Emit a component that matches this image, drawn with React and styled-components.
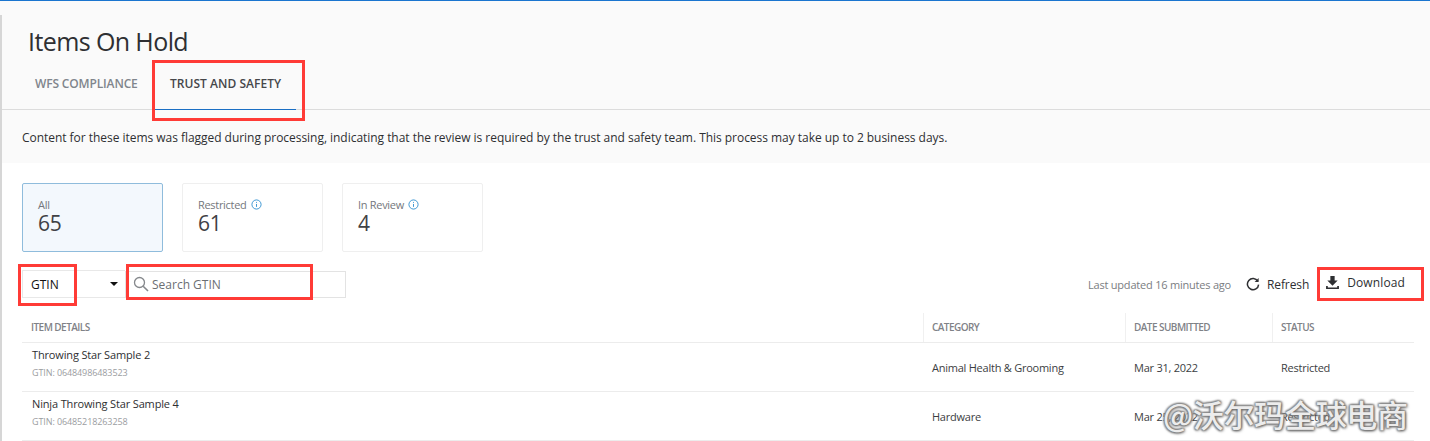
import React from "react";
import styled, { createGlobalStyle } from "styled-components";

const Global = createGlobalStyle`
  html, body { margin: 0; padding: 0; background: #fff; }
  body { font-family: "Open Sans", "Noto Sans", sans-serif; color: #2e2f32; }
`;
const Page = styled.div`
  position: relative; width: 1430px; height: 441px; overflow: hidden; background: #fff;
  border-top: 1px solid #1a75cf; box-sizing: border-box;
`;
const LeftEdge = styled.div`
  position: absolute; left: 0; top: 14px; bottom: 0; width: 2px; background: #d6d6d6;
`;
const Head = styled.header`
  background: #fafafa; height: 162px; padding-left: 2px; box-sizing: border-box;
`;
const Title = styled.h1`
  margin: 0; padding: 23px 0 0 26px; height: 61px; box-sizing: border-box;
  font-size: 25px; font-weight: 400; line-height: 34px; letter-spacing: -0.6px; color: #2e2f32;
`;
const Tabs = styled.nav`
  display: flex; height: 48px; box-sizing: border-box; border-bottom: 1px solid #dcdcdc; padding-left: 18px;
`;
const Tab = styled.div`
  width: ${p => p.$w}px; padding: 14px 0 0 ${p => p.$pad}px; box-sizing: border-box; margin-bottom: -1px;
  font-size: 12px; font-weight: 600; line-height: 16px;
  letter-spacing: ${p => (p.$active ? "0.03px" : "-0.15px")};
  color: ${p => (p.$active ? "#46474a" : "#80858c")};
  border-bottom: 1px solid ${p => (p.$active ? "#1a6fc4" : "transparent")};
`;
const Notice = styled.p`
  margin: 0; padding: 19px 0 0 20px; font-size: 12px; line-height: 17px; letter-spacing: -0.036px; color: #2e2f32;
`;
const Body = styled.main`
  padding: 20px 16px 0 22px; background: #fff;
`;
const Cards = styled.div`display: flex; gap: 19px;`;
const Card = styled.div`
  width: 141px; height: 69px; box-sizing: border-box; padding: 13px 15px; border-radius: 2px;
  border: 1px solid ${p => (p.$active ? "#8fbcdc" : "#efefef")};
  background: ${p => (p.$active ? "#f3f8fd" : "#fff")};
`;
const CardLabel = styled.div`
  display: flex; align-items: center; gap: 4px; font-size: 11px; line-height: 15px; letter-spacing: -0.3px; color: #74777c;
`;
const CardValue = styled.div`
  font-size: 21px; line-height: 23px; color: #3f4145; letter-spacing: -0.3px;
`;
const Toolbar = styled.div`
  display: flex; align-items: center; height: 28px; margin-top: 18px;
`;
const Select = styled.div`
  display: flex; align-items: center; justify-content: space-between; box-sizing: border-box;
  width: 103px; height: 28px; padding: 0 7px 0 8px; border: 1px solid #e8e8e8; border-right: 0;
  font-size: 12px; color: #111;
`;
const Caret = styled.span`
  width: 0; height: 0; border-left: 4px solid transparent; border-right: 4px solid transparent; border-top: 4px solid #111;
`;
const Search = styled.div`
  display: flex; align-items: center; gap: 3px; box-sizing: border-box; width: 221px; height: 27px;
  padding-left: 7px; border: 1px solid #e3e3e3; font-size: 12px; color: #6b6e73;
`;
const Spacer = styled.div`flex: 1;`;
const Updated = styled.span`
  font-size: 11px; letter-spacing: -0.21px; color: #7a7d82; margin-right: 15px;
`;
const Action = styled.div`
  display: flex; align-items: center; gap: 7px; font-size: 12px; color: #2e2f32;
  letter-spacing: ${p => (p.$up ? "0.12px" : "-0.1px")};
  margin-right: ${p => p.$mr || 0}px; position: relative; top: ${p => (p.$up ? "-2px" : "0")};
`;
const Table = styled.div`margin-top: 15px;`;
const HeadRow = styled.div`
  display: grid; grid-template-columns: 901px 202px 147px 142px; height: 29px; border-bottom: 1px solid #ececec;
`;
const HeadCell = styled.div`
  padding: 0 8px; font-size: 10px; font-weight: 600; line-height: 29px; letter-spacing: -0.55px; color: #7f8287;
  border-left: 1px solid ${p => (p.$first ? "transparent" : "#f0f0f0")};
`;
const Row = styled.div`
  display: grid; grid-template-columns: 901px 202px 147px 142px; height: 49px; align-items: center; box-sizing: border-box;
  border-bottom: 1px solid #ececec;
`;
const ItemCell = styled.div`padding: 0 0 8px 10px;`;
const ItemName = styled.div`font-size: 11px; line-height: 16px; letter-spacing: -0.15px; color: #2e2f32;`;
const ItemCode = styled.div`font-size: 9px; line-height: 12px; margin-top: 4px; letter-spacing: -0.1px; color: #9b9da1;`;
const Cell = styled.div`
  padding: 0 9px; font-size: 11px; letter-spacing: -0.24px; color: #3c3e42;
`;
const Mark = styled.div`
  position: absolute; box-sizing: border-box; border: 3px solid #ff3b36;
  left: ${p => p.$x}px; top: ${p => p.$y}px; width: ${p => p.$w}px; height: ${p => p.$h}px;
`;
const Watermark = styled.div`
  position: absolute; left: 1163px; top: 394px; font-family: "Noto Sans CJK SC", sans-serif; font-size: 31px; line-height: 38px;
  white-space: nowrap; color: #ececec; font-weight: 500; letter-spacing: -0.3px;
  text-shadow: 0 0 2px #777, 1px 1px 3px #666, -1px -1px 2px #999, 1px -1px 2px #999, -1px 1px 2px #999;
`;

const Info = () => (
  <svg width="11" height="11" viewBox="0 0 12 12" fill="none" stroke="#2f8fd0" strokeWidth="1">
    <circle cx="6" cy="6" r="5" />
    <path d="M6 5.4v3.2M6 3.2v1" />
  </svg>
);
const Glass = () => (
  <svg width="16" height="16" viewBox="0 0 16 16" fill="none" stroke="#85888c" strokeWidth="1.3">
    <circle cx="6.5" cy="6.5" r="5" />
    <path d="M10.2 10.2 15 15" strokeWidth="1.6" />
  </svg>
);
const RefreshIcon = () => (
  <svg width="14" height="14" viewBox="0 0 14 14" fill="none" stroke="#2e2f32" strokeWidth="1.5">
    <path d="M11.8 4.2A5.6 5.6 0 1 0 12.6 7.6" />
    <path d="M12.6 1v4H8.6z" fill="#2e2f32" stroke="none" />
  </svg>
);
const DownloadIcon = () => (
  <svg width="15" height="15" viewBox="0 0 14 14" fill="#2e2f32">
    <path d="M5 1h4v4.2h2.8L7 10 2.2 5.2H5z" />
    <path d="M1 10.2h1.6v1.5h8.8v-1.5H13V13H1z" />
  </svg>
);

const rows = [
  ["Throwing Star Sample 2", "GTIN: 06484986483523", "Animal Health & Grooming", "Mar 31, 2022", "Restricted"],
  ["Ninja Throwing Star Sample 4", "GTIN: 06485218263258", "Hardware", "Mar 25, 2022", "Restricted"],
];

export default function App() {
  return (
    <>
      <Global />
      <Page>
        <LeftEdge />
        <Head>
          <Title>Items On Hold</Title>
          <Tabs>
            <Tab $w={135} $pad={15}>WFS COMPLIANCE</Tab>
            <Tab $w={141} $active $pad={15}>TRUST AND SAFETY</Tab>
          </Tabs>
          <Notice>Content for these items was flagged during processing, indicating that the review is required by the trust and safety team. This process may take up to 2 business days.</Notice>
        </Head>
        <Body>
          <Cards>
            <Card $active><CardLabel>All</CardLabel><CardValue>65</CardValue></Card>
            <Card><CardLabel>Restricted <Info /></CardLabel><CardValue>61</CardValue></Card>
            <Card><CardLabel>In Review <Info /></CardLabel><CardValue>4</CardValue></Card>
          </Cards>
          <Toolbar>
            <Select>GTIN<Caret /></Select>
            <Search><Glass />Search GTIN</Search>
            <Spacer />
            <Updated>Last updated 16 minutes ago</Updated>
            <Action $mr={16}><RefreshIcon />Refresh</Action>
            <Action $mr={9} $up><DownloadIcon />Download</Action>
          </Toolbar>
          <Table>
            <HeadRow>
              <HeadCell $first>ITEM DETAILS</HeadCell>
              <HeadCell>CATEGORY</HeadCell>
              <HeadCell>DATE SUBMITTED</HeadCell>
              <HeadCell>STATUS</HeadCell>
            </HeadRow>
            {rows.map(r => (
              <Row key={r[1]}>
                <ItemCell><ItemName>{r[0]}</ItemName><ItemCode>{r[1]}</ItemCode></ItemCell>
                <Cell>{r[2]}</Cell>
                <Cell>{r[3]}</Cell>
                <Cell>{r[4]}</Cell>
              </Row>
            ))}
          </Table>
        </Body>
        <Mark $x={152} $y={59} $w={153} $h={61} />
        <Mark $x={18} $y={263} $w={59} $h={42} />
        <Mark $x={126} $y={263} $w={187} $h={36} />
        <Mark $x={1317} $y={266} $w={107} $h={34} />
        <Watermark>@沃尔玛全球电商</Watermark>
      </Page>
    </>
  );
}
